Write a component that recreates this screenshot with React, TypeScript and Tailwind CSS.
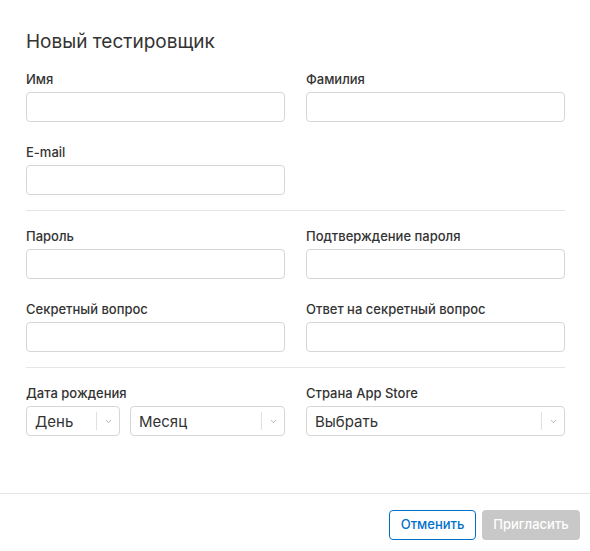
import { ChevronDown } from "lucide-react";

const Field = ({ label }: { label: string }) => (
  <div className="flex flex-col">
    <label className="h-[18px] mb-1 text-[13px] leading-[18px] font-medium text-[#333]">
      {label}
    </label>
    <input
      type="text"
      className="h-[30px] w-full rounded-[4px] border border-[#d6d6d6] bg-white px-2 text-[15px] text-[#333] outline-none"
    />
  </div>
);

const Select = ({ value, className }: { value: string; className?: string }) => (
  <div
    className={`flex h-[30px] items-center rounded-[4px] border border-[#d6d6d6] bg-white ${className ?? ""}`}
  >
    <span className="flex-1 pl-2 text-[15px] leading-none text-[#333]">
      {value}
    </span>
    <span className="h-[18px] w-px bg-[#e0e0e0]" />
    <span className="flex w-[22px] items-center justify-center text-[#999]">
      <ChevronDown className="h-[9px] w-[9px]" strokeWidth={2} />
    </span>
  </div>
);

export default function App() {
  return (
    <div
      className="flex h-[551px] w-[590px] flex-col bg-white"
      style={{ fontFamily: "Inter, 'Noto Sans', sans-serif" }}
    >
      <div className="flex-1 pl-[26px] pr-[25px] pt-[30px]">
        <h1 className="mb-[16px] h-[24px] text-[19px] leading-[24px] font-normal text-[#333]">
          Новый тестировщик
        </h1>

        <div className="grid grid-cols-2 gap-x-[21px] gap-y-[21px]">
          <Field label="Имя" />
          <Field label="Фамилия" />
          <Field label="E-mail" />
          <div />
        </div>

        <div className="mt-[15px] mb-[16px] h-px bg-[#e5e5e5]" />

        <div className="grid grid-cols-2 gap-x-[21px] gap-y-[21px]">
          <Field label="Пароль" />
          <Field label="Подтверждение пароля" />
          <Field label="Секретный вопрос" />
          <Field label="Ответ на секретный вопрос" />
        </div>

        <div className="mt-[15px] mb-[16px] h-px bg-[#e5e5e5]" />

        <div className="grid grid-cols-2 gap-x-[21px]">
          <div className="flex flex-col">
            <label className="h-[18px] mb-1 text-[13px] leading-[18px] font-medium text-[#333]">
              Дата рождения
            </label>
            <div className="flex gap-[10px]">
              <Select value="День" className="w-[94px]" />
              <Select value="Месяц" className="flex-1" />
            </div>
          </div>
          <div className="flex flex-col">
            <label className="h-[18px] mb-1 text-[13px] leading-[18px] font-medium text-[#333]">
              Страна App Store
            </label>
            <Select value="Выбрать" />
          </div>
        </div>
      </div>

      <div className="h-px bg-[#e5e5e5]" />
      <div className="flex justify-end gap-[6px] px-[10px] pt-[16px] pb-[11px]">
        <button className="h-[30px] w-[87px] rounded-[4px] border border-[#0070c9] bg-white text-[13px] font-medium text-[#0070c9]">
          Отменить
        </button>
        <button className="h-[30px] w-[98px] rounded-[4px] bg-[#c8c8c8] text-[13px] font-medium text-white">
          Пригласить
        </button>
      </div>
    </div>
  );
}
